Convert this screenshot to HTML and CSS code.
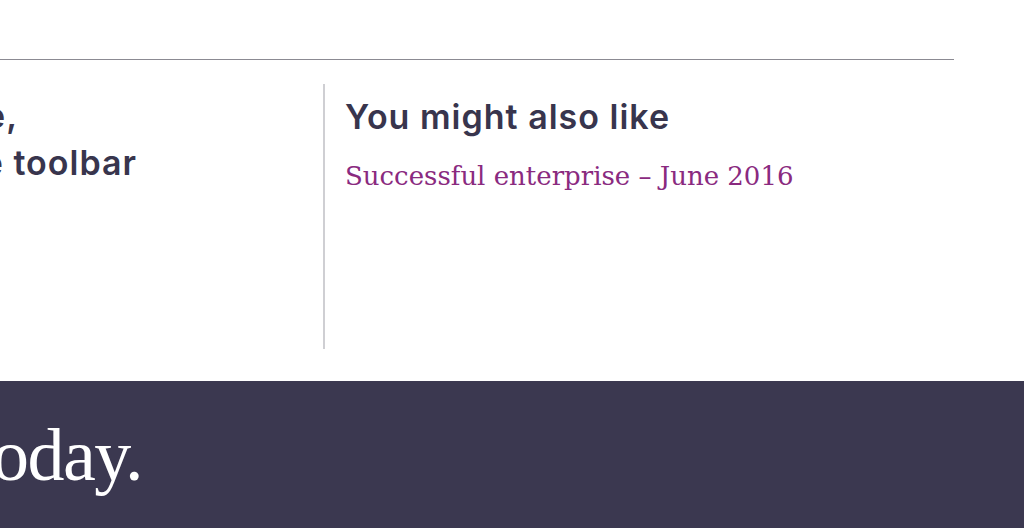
FILE: index.html
```html
<!DOCTYPE html>
<html lang="en">
<head>
    <meta charset="UTF-8">
    <meta name="viewport" content="width=device-width, initial-scale=1.0">
    <title>You might also like</title>
    <link rel="stylesheet" href="styles.css">
</head>
<body>
    <div class="page">
        <div class="rule"></div>

        <div class="content">
            <div class="share">
                <h2 class="share-title">
                    <span class="line line-first">If you enjoyed this page,</span>
                    <span class="line">share it using the toolbar</span>
                </h2>
            </div>

            <div class="related">
                <h2 class="related-title">You might also like</h2>
                <a class="related-link" href="#">Successful enterprise &ndash; June 2016</a>
            </div>
        </div>
    </div>

    <footer class="footer">
        <div class="footer-inner">
            <p class="footer-tagline">Subscribe today.</p>
        </div>
    </footer>
</body>
</html>
```

FILE: styles.css
```css
body {
    margin: 0;
    background: #fff;
    color: #38354d;
    font-family: Inter, "Open Sans", sans-serif;
    overflow: hidden;
}
.rule {
    width: 954px;
    height: 59px;
    border-bottom: 1px solid #8b8a92;
}
.content {
    display: flex;
    padding-top: 24px;
}
.share {
    width: 323px;
    height: 265px;
    border-right: 2px solid #cfcfd3;
    overflow: hidden;
}
.share-title {
    display: flex;
    flex-direction: column;
    align-items: flex-end;
    width: 137px;
    margin: 8px 0 0;
    font-size: 34px;
    font-weight: 600;
    line-height: 47px;
    letter-spacing: 1px;
    white-space: nowrap;
}
.line-first {
    margin-right: 119px;
}
.related {
    padding-left: 20px;
}
.related-title {
    margin: 11px 0 0;
    font-size: 34px;
    font-weight: 600;
    line-height: 44px;
    letter-spacing: 1px;
}
.related-link {
    display: block;
    margin-top: 19px;
    color: #8a2a7f;
    font-family: "DejaVu Serif", serif;
    font-size: 26px;
    line-height: 36px;
    text-decoration: none;
}
.footer {
    margin-top: 32px;
    height: 147px;
    background: #3b3850;
    overflow: hidden;
}
.footer-inner {
    display: flex;
    justify-content: flex-end;
    width: 142px;
}
.footer-tagline {
    margin: 0;
    padding-top: 29px;
    color: #fff;
    font-family: "Liberation Serif", serif;
    font-size: 74px;
    line-height: 90px;
    letter-spacing: -1.5px;
    white-space: nowrap;
}
```
